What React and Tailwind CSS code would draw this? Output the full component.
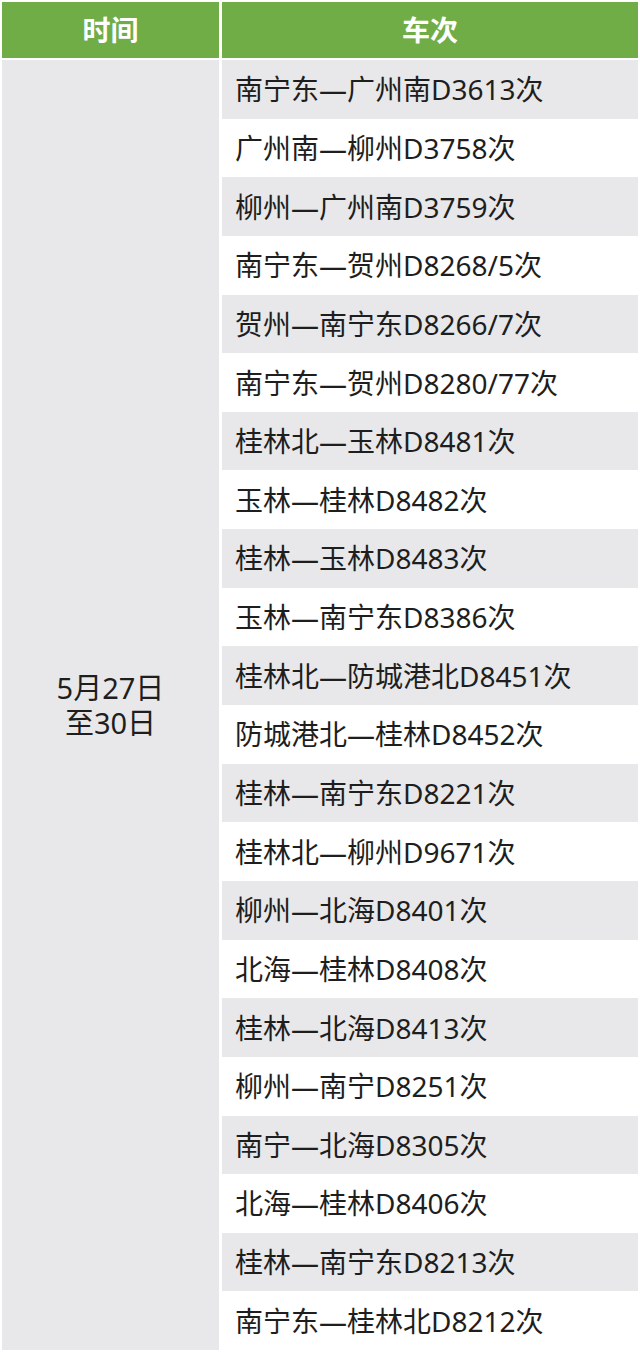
import React from 'react';

const trains = [
  '南宁东—广州南D3613次',
  '广州南—柳州D3758次',
  '柳州—广州南D3759次',
  '南宁东—贺州D8268/5次',
  '贺州—南宁东D8266/7次',
  '南宁东—贺州D8280/77次',
  '桂林北—玉林D8481次',
  '玉林—桂林D8482次',
  '桂林—玉林D8483次',
  '玉林—南宁东D8386次',
  '桂林北—防城港北D8451次',
  '防城港北—桂林D8452次',
  '桂林—南宁东D8221次',
  '桂林北—柳州D9671次',
  '柳州—北海D8401次',
  '北海—桂林D8408次',
  '桂林—北海D8413次',
  '柳州—南宁D8251次',
  '南宁—北海D8305次',
  '北海—桂林D8406次',
  '桂林—南宁东D8213次',
  '南宁东—桂林北D8212次',
];

export default function App() {
  return (
    <div
      className="w-[640px] h-[1356px] bg-white p-[2px] text-[#1e1e1e]"
      style={{ fontFamily: '"Noto Sans", "Noto Sans CJK SC", sans-serif' }}
    >
      {/* Header */}
      <div className="flex gap-[3px] h-[56px]">
        <div className="w-[217px] bg-[#70ad47] text-white font-bold text-[28px] flex items-center justify-center">
          时间
        </div>
        <div className="flex-1 bg-[#70ad47] text-white font-bold text-[28px] flex items-center justify-center">
          车次
        </div>
      </div>

      {/* Body */}
      <div className="flex gap-[3px] mt-[2px] h-[1290px]">
        <div className="w-[217px] bg-[#e8e7e9] flex flex-col items-center justify-center text-[29px]">
          <div className="leading-[35px]">5月27日</div>
          <div className="leading-[35px]">至30日</div>
        </div>
        <div className="flex-1 flex flex-col">
          {trains.map((t, idx) => (
            <div
              key={idx}
              className={`flex-1 flex items-center pl-[13px] text-[28px] ${idx % 2 === 0 ? 'bg-[#e8e7e9]' : 'bg-white'}`}
            >
              {t}
            </div>
          ))}
        </div>
      </div>
    </div>
  );
}
